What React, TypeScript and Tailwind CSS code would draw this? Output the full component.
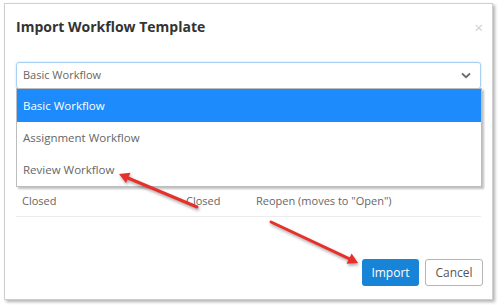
import React from 'react';

const options = ['Basic Workflow', 'Assignment Workflow', 'Review Workflow'];

function Arrows() {
  return (
    <svg
      className="absolute left-0 top-0 pointer-events-none drop-shadow-[1px_2px_1.5px_rgba(0,0,0,0.35)]"
      width="498"
      height="305"
      viewBox="0 0 498 305"
    >
      {/* arrow to "Review Workflow" */}
      <line x1="197" y1="207" x2="128" y2="178" stroke="#e8302b" strokeWidth="3" strokeLinecap="round" />
      <polygon points="119,174 130.5,172.8 126,183" fill="#e8302b" />
      {/* arrow to Import button */}
      <line x1="271" y1="222" x2="349" y2="258.7" stroke="#e8302b" strokeWidth="3" strokeLinecap="round" />
      <polygon points="358,263 346.5,263.8 351.6,253.6" fill="#e8302b" />
    </svg>
  );
}

export default function App() {
  return (
    <div
      className="relative w-[498px] h-[305px] bg-white pl-[4px] pt-[3px] overflow-hidden"
      style={{ fontFamily: '"Open Sans", "Liberation Sans", sans-serif' }}
    >
      <div className="relative w-[489px] h-[297px] bg-white border border-[#cfcfcf] px-[11px] shadow-[2px_2px_3px_rgba(0,0,0,0.3)]">
        {/* Header */}
        <div className="flex items-center justify-between pt-[13px]">
          <h2 className="text-[14px] leading-[20px] font-bold text-[#333]">Import Workflow Template</h2>
          <span className="text-[15px] leading-[20px] text-[#cfcfcf] mr-[-2px]">×</span>
        </div>

        {/* Select */}
        <div className="mt-[25px] h-[27px] flex items-center justify-between border border-[#a8d0f2] rounded-[3px] pl-[6px] pr-[9px] shadow-[0_0_2px_rgba(102,175,233,0.5)]">
          <span className="text-[11px] text-[#666]">Basic Workflow</span>
          <svg width="10" height="7" viewBox="0 0 10 7">
            <path d="M1 1.5 L5 5.2 L9 1.5" fill="none" stroke="#6b6b6b" strokeWidth="1.8" />
          </svg>
        </div>

        {/* Table row behind the menu */}
        <div className="mt-[97px] h-[31px] grid grid-cols-[164px_70px_1fr] items-center border-b border-[#ececec] pl-[6px] text-[11px] text-[#666]">
          <span>Closed</span>
          <span>Closed</span>
          <span>Reopen (moves to "Open")</span>
        </div>

        {/* Footer buttons */}
        <div className="mt-[42px] flex justify-end gap-[6px] mr-[-2px]">
          <button className="w-[57px] h-[27px] rounded-[3px] bg-[#1784d8] text-white text-[12px]">Import</button>
          <button className="w-[58px] h-[27px] rounded-[3px] border border-[#b5b5b5] bg-white text-[#555] text-[12px]">Cancel</button>
        </div>

        {/* Open dropdown menu */}
        <div className="absolute left-[11px] top-[84px] w-[466px] bg-white border border-[#bdbdbd] shadow-[2px_2px_2px_rgba(0,0,0,0.25)]">
          {options.map((o, i) => (
            <div
              key={o}
              className={
                i === 0
                  ? 'h-[33px] flex items-center pl-[6px] text-[11.5px] bg-[#1e8bfd] text-white'
                  : 'h-[32px] flex items-center pl-[6px] text-[11.5px] text-[#666]'
              }
            >
              {o}
            </div>
          ))}
        </div>
      </div>
      <Arrows />
    </div>
  );
}
